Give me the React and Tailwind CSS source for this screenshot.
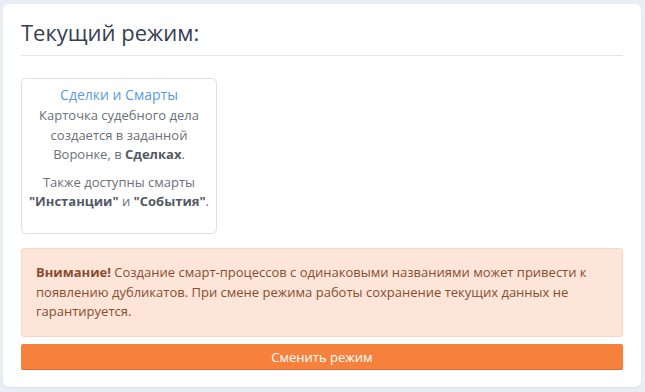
import React from "react";

const App = () => {
  return (
    <div className="w-[645px] h-[392px] bg-[#e9eef5] pt-[4px] pl-[3px] pr-[4px] pb-[5px] font-['Open_Sans',sans-serif]">
      <div className="h-full bg-white rounded-[6px] px-[18px] pt-[13px] shadow-[0_1px_2px_rgba(0,0,0,0.06)]">
        {/* Header */}
        <h2 className="text-[22px] leading-[30px] text-[#36404f] font-normal pb-[8px] border-b border-[#e2e4e8]">
          Текущий режим:
        </h2>

        {/* Mode card */}
        <div className="mt-[22px] w-[196px] h-[156px] border border-[#dfe1e5] rounded-[5px] pt-[6px] text-center">
          <div className="text-[14px] leading-[20px] text-[#5a9bdf]">Сделки и Смарты</div>
          <p className="text-[13px] leading-[19.5px] text-[#6b707a] mt-[1px]">
            Карточка судебного дела<br />
            создается в заданной<br />
            Воронке, в <b className="font-bold text-[#535965]">Сделках</b>.
          </p>
          <p className="text-[13px] leading-[19.5px] text-[#6b707a] mt-[8px]">
            Также доступны смарты<br />
            <b className="font-bold text-[#535965]">"Инстанции"</b> и <b className="font-bold text-[#535965]">"События"</b>.
          </p>
        </div>

        {/* Warning */}
        <div className="mt-[14px] h-[89px] bg-[#fde5d9] border border-[#fbd6c3] rounded-[3px] pl-[14px] pr-[12px] pt-[14px] text-[13px] leading-[19.5px] text-[#8a4c2e]">
          <b className="font-bold">Внимание!</b> Создание смарт-процессов с одинаковыми названиями может привести к появлению дубликатов. При смене режима работы сохранение текущих данных не гарантируется.
        </div>

        {/* Button */}
        <button className="mt-[7px] w-full h-[26px] bg-[#f5813d] rounded-[2px] text-white text-[13px] leading-[26px] text-center border-b border-[#e26d2a]">
          Сменить режим
        </button>
      </div>
    </div>
  );
};

export default App;
